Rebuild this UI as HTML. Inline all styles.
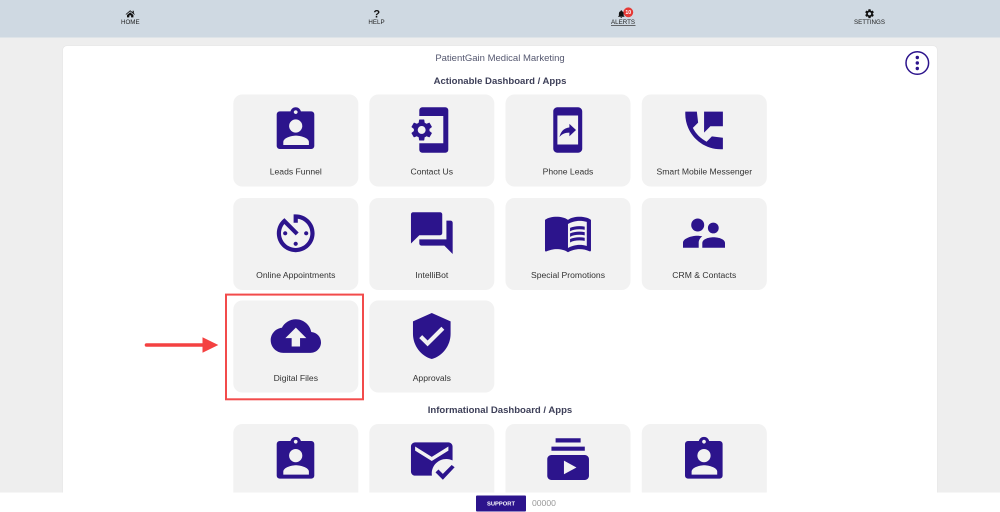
<!DOCTYPE html>
<html><head><meta charset="utf-8"><title>Dashboard</title>
<style>
html,body{margin:0;padding:0;background:#eee;width:1000px;height:512px;overflow:hidden}
svg{display:block}
text{font-family:"Liberation Sans",Arial,sans-serif}
.l{font-size:8.6px;fill:#333;text-anchor:middle}
.n{font-size:6.2px;fill:#222;text-anchor:middle}
.h{font-size:9.55px;fill:#3d3f58;font-weight:bold;text-anchor:middle}
.i{fill:#2c148c}
.t{fill:#f2f2f2}
</style></head><body>
<svg width="1000" height="512" viewBox="0 0 1000 512" xmlns="http://www.w3.org/2000/svg">
<rect width="1000" height="512" fill="#eeeeee"/>
<rect x="62.5" y="45.5" width="875" height="470" rx="4" fill="#e6e6e6"/>
<rect x="63" y="46" width="874" height="470" rx="4" fill="#fff"/>
<rect width="1000" height="37.5" fill="#cfd9e2"/>

<!-- nav -->
<path d="M130.2 10.3l2.4 2v-1.6h1.2v2.6l1 .9-.5.6-4.1-3.4-4.1 3.4-.5-.6zM127 15l3.2-2.6 3.2 2.6v2.4h-2.3v-2h-1.8v2H127z" fill="#111"/>
<text x="130.3" y="24" class="n">HOME</text>
<text x="376.7" y="17.5" font-size="11" font-weight="bold" text-anchor="middle" fill="#111">?</text>
<text x="376.5" y="24" class="n">HELP</text>
<g transform="translate(616.5 9.2) scale(.4)"><path fill="#111" d="M12 22c1.1 0 2-.9 2-2h-4c0 1.1.89 2 2 2zm6-6v-5c0-3.07-1.64-5.64-4.5-6.32V4c0-.83-.67-1.5-1.5-1.5s-1.5.67-1.5 1.5v.68C7.63 5.36 6 7.92 6 11v5l-2 2v1h16v-1l-2-2z"/></g>
<circle cx="628.3" cy="12.3" r="4.9" fill="#e53935"/>
<text x="628.3" y="14.2" font-size="5.2" font-weight="bold" fill="#fff" text-anchor="middle">10</text>
<text x="623" y="24" class="n">ALERTS</text>
<rect x="611" y="25" width="24.5" height=".7" fill="#333"/>
<g transform="translate(864 8.2) scale(.46)"><path fill="#111" d="M19.14 12.94c.04-.3.06-.61.06-.94 0-.32-.02-.64-.07-.94l2.03-1.58c.18-.14.23-.41.12-.61l-1.92-3.32c-.12-.22-.37-.29-.59-.22l-2.39.96c-.5-.38-1.03-.7-1.62-.94L14.4 2.81c-.04-.24-.24-.41-.48-.41h-3.84c-.24 0-.43.17-.47.41L9.25 5.35c-.59.24-1.13.57-1.62.94l-2.39-.96c-.22-.08-.47 0-.59.22L2.74 8.87c-.12.21-.08.47.12.61l2.03 1.58c-.05.3-.09.63-.09.94s.02.64.07.94l-2.03 1.58c-.18.14-.23.41-.12.61l1.92 3.32c.12.22.37.29.59.22l2.39-.96c.5.38 1.03.7 1.62.94l.36 2.54c.05.24.24.41.48.41h3.84c.24 0 .44-.17.47-.41l.36-2.54c.59-.24 1.13-.56 1.62-.94l2.39.96c.22.08.47 0 .59-.22l1.92-3.32c.12-.22.07-.47-.12-.61l-2.01-1.58zM12 15.6c-1.98 0-3.6-1.62-3.6-3.6s1.62-3.6 3.6-3.6 3.6 1.62 3.6 3.6-1.62 3.6-3.6 3.6z"/></g>
<text x="869.5" y="24" class="n">SETTINGS</text>

<!-- titles -->
<text x="500" y="61" font-size="9.5" fill="#555870" text-anchor="middle">PatientGain Medical Marketing</text>
<text x="500" y="84" class="h">Actionable Dashboard / Apps</text>
<text x="500" y="413" class="h">Informational Dashboard / Apps</text>

<!-- menu -->
<circle cx="917.3" cy="63" r="11.3" fill="#fff" stroke="#2c148c" stroke-width="1.5"/>
<circle cx="917.3" cy="57.5" r="1.7" class="i"/><circle cx="917.3" cy="63" r="1.7" class="i"/><circle cx="917.3" cy="68.5" r="1.7" class="i"/>

<!-- tiles -->
<rect x="233.3" y="94.5" width="125" height="92" rx="9" class="t"/>
<rect x="369.3" y="94.5" width="125" height="92" rx="9" class="t"/>
<rect x="505.5" y="94.5" width="125" height="92" rx="9" class="t"/>
<rect x="641.8" y="94.5" width="125" height="92" rx="9" class="t"/>
<rect x="233.3" y="198" width="125" height="92" rx="9" class="t"/>
<rect x="369.3" y="198" width="125" height="92" rx="9" class="t"/>
<rect x="505.5" y="198" width="125" height="92" rx="9" class="t"/>
<rect x="641.8" y="198" width="125" height="92" rx="9" class="t"/>
<rect x="233.3" y="300.5" width="125" height="92" rx="9" class="t"/>
<rect x="369.3" y="300.5" width="125" height="92" rx="9" class="t"/>
<rect x="233.3" y="424" width="125" height="92" rx="9" class="t"/>
<rect x="369.3" y="424" width="125" height="92" rx="9" class="t"/>
<rect x="505.5" y="424" width="125" height="92" rx="9" class="t"/>
<rect x="641.8" y="424" width="125" height="92" rx="9" class="t"/>

<!-- labels -->
<text x="295.8" y="174.7" class="l">Leads Funnel</text>
<text x="431.8" y="174.7" class="l">Contact Us</text>
<text x="568" y="174.7" class="l">Phone Leads</text>
<text x="704.3" y="174.7" class="l">Smart Mobile Messenger</text>
<text x="295.8" y="278" class="l">Online Appointments</text>
<text x="431.8" y="278" class="l">IntelliBot</text>
<text x="568" y="278" class="l">Special Promotions</text>
<text x="704.3" y="278" class="l">CRM &amp; Contacts</text>
<text x="295.8" y="381" class="l">Digital Files</text>
<text x="431.8" y="381" class="l">Approvals</text>

<!-- badge row1 -->
<g>
<path class="i" fill-rule="evenodd" d="M279.7 111.4h10.8c.6-2.4 2.8-4.1 5.2-4.1s4.6 1.7 5.2 4.1h10.4a3 3 0 0 1 3 3V146a3 3 0 0 1-3 3h-31.6a3 3 0 0 1-3-3v-31.6a3 3 0 0 1 3-3zm16 -1.2a1.9 1.9 0 1 0 .01 0z"/>
<circle cx="295.7" cy="126" r="6.6" fill="#f2f2f2"/>
<path fill="#f2f2f2" d="M283.3 145v-3c0-4.2 8.4-6.4 12.6-6.4s13 2.2 13 6.4v3z"/>
</g>
<!-- contact us -->
<path class="i" d="M422.3 107.3h23a3 3 0 0 1 3 3v39.4a3 3 0 0 1-3 3h-23a3 3 0 0 1-3-3v-6.4h24V116h-24v-5.7a3 3 0 0 1 3-3z"/>
<g transform="translate(408.6 116.9) scale(1.09)"><path class="i" d="M19.14 12.94c.04-.3.06-.61.06-.94 0-.32-.02-.64-.07-.94l2.03-1.58c.18-.14.23-.41.12-.61l-1.92-3.32c-.12-.22-.37-.29-.59-.22l-2.39.96c-.5-.38-1.03-.7-1.62-.94L14.4 2.81c-.04-.24-.24-.41-.48-.41h-3.84c-.24 0-.43.17-.47.41L9.25 5.35c-.59.24-1.13.57-1.62.94l-2.39-.96c-.22-.08-.47 0-.59.22L2.74 8.87c-.12.21-.08.47.12.61l2.03 1.58c-.05.3-.09.63-.09.94s.02.64.07.94l-2.03 1.58c-.18.14-.23.41-.12.61l1.92 3.32c.12.22.37.29.59.22l2.39-.96c.5.38 1.03.7 1.62.94l.36 2.54c.05.24.24.41.48.41h3.84c.24 0 .44-.17.47-.41l.36-2.54c.59-.24 1.13-.56 1.62-.94l2.39.96c.22.08.47 0 .59-.22l1.92-3.32c.12-.22.07-.47-.12-.61l-2.01-1.58zM12 15.6c-1.98 0-3.6-1.62-3.6-3.6s1.62-3.6 3.6-3.6 3.6 1.62 3.6 3.6-1.62 3.6-3.6 3.6z"/></g>
<!-- phone leads -->
<g transform="translate(542.9 105.2) scale(2.07)"><path class="i" d="M17 1.01L7 1c-1.1 0-1.99.9-1.99 2v18c0 1.1.89 2 1.99 2h10c1.1 0 2-.9 2-2V3c0-1.1-.9-1.99-2-1.99zM17 19H7V5h10v14zm-4.2-5.76v1.75L16 12l-3.2-2.98v1.7c-3.11.43-4.35 2.56-4.8 4.7 1.11-1.5 2.58-2.18 4.8-2.18z"/></g>
<!-- messenger -->
<g transform="translate(679 105.4) scale(2.09)"><path class="i" d="M21 15.46l-5.27-.61-2.52 2.52c-2.83-1.44-5.15-3.75-6.59-6.59l2.53-2.53L8.54 3H3.03C2.45 13.18 10.82 21.55 21 20.97v-5.51zM12 3v10l3-3h6V3h-9z"/></g>
<!-- appointments -->
<g transform="translate(270.5 208.1) scale(2.1)"><path class="i" d="M11 17c0 .55.45 1 1 1s1-.45 1-1-.45-1-1-1-1 .45-1 1zm0-14v4h2V5.08c3.39.49 6 3.39 6 6.92 0 3.87-3.13 7-7 7s-7-3.13-7-7c0-1.68.59-3.22 1.58-4.42L12 13l1.41-1.41-6.8-6.8v.02C4.42 6.45 3 9.05 3 12c0 4.97 4.02 9 9 9 4.97 0 9-4.03 9-9s-4.03-9-9-9h-1zm7 9c0-.55-.45-1-1-1s-1 .45-1 1 .45 1 1 1 1-.45 1-1zM6 12c0 .55.45 1 1 1s1-.45 1-1-.45-1-1-1-1 .45-1 1z"/></g>
<!-- intellibot -->
<g transform="translate(406.8 208.1) scale(2.085)"><path class="i" d="M21 6h-2v9H6v2c0 .55.45 1 1 1h11l4 4V7c0-.55-.45-1-1-1zm-4 6V3c0-.55-.45-1-1-1H3c-.55 0-1 .45-1 1v14l4-4h10c.55 0 1-.45 1-1z"/></g>
<!-- book -->
<g transform="translate(542.9 207.3) scale(2.09)"><path class="i" d="M21 5c-1.11-.35-2.33-.5-3.5-.5-1.95 0-4.05.4-5.5 1.5-1.45-1.1-3.55-1.5-5.5-1.5S2.45 4.9 1 6v14.65c0 .25.25.5.5.5.1 0 .15-.05.25-.05C3.1 20.45 5.05 20 6.5 20c1.95 0 4.05.4 5.5 1.5 1.35-.85 3.8-1.5 5.5-1.5 1.65 0 3.35.3 4.75 1.05.1.05.15.05.25.05.25 0 .5-.25.5-.5V6c-.6-.45-1.25-.75-2-1zm0 13.5c-1.1-.35-2.3-.5-3.5-.5-1.7 0-4.15.65-5.5 1.5V8c1.35-.85 3.8-1.5 5.5-1.5 1.2 0 2.4.15 3.5.5v11.5z"/><path class="i" d="M17.5 10.5c.88 0 1.73.09 2.5.26V9.24c-.79-.15-1.64-.24-2.5-.24-1.7 0-3.24.29-4.5.83v1.66c1.13-.64 2.7-.99 4.5-.99zM13 12.49v1.66c1.13-.64 2.7-.99 4.5-.99.88 0 1.73.09 2.5.26V11.9c-.79-.15-1.64-.24-2.5-.24-1.7 0-3.24.3-4.5.83zM17.5 14.33c-1.7 0-3.24.29-4.5.83v1.66c1.13-.64 2.7-.99 4.5-.99.88 0 1.73.09 2.5.26v-1.52c-.79-.16-1.64-.24-2.5-.24z"/></g>
<!-- crm -->
<circle cx="697.7" cy="225" r="6.5" class="i"/>
<circle cx="713.3" cy="228" r="5.4" class="i"/>
<path class="i" d="M683 247.7v-5c0-4.4 9-7 14-7 2 0 3.8.3 5.3.6-2 1.6-3.6 3.8-3.6 6.4v5z"/>
<path class="i" d="M702.3 247.7v-4.5c0-4 6-5.9 11.2-5.9s11.5 1.9 11.5 5.9v4.5z"/>
<!-- cloud -->
<g transform="translate(270.7 310.9) scale(2.096)"><path class="i" d="M19.35 10.04C18.67 6.59 15.64 4 12 4 9.11 4 6.6 5.64 5.35 8.04 2.34 8.36 0 10.91 0 14c0 3.31 2.69 6 6 6h13c2.76 0 5-2.24 5-5 0-2.64-2.05-4.78-4.65-4.96zM14 13v4h-4v-4H7l5-5 5 5h-3z"/></g>
<!-- shield -->
<g transform="translate(406.7 310.9) scale(2.09)"><path class="i" d="M12 1L3 5v6c0 5.55 3.84 10.74 9 12 5.16-1.26 9-6.45 9-12V5l-9-4zm-2 16l-4-4 1.41-1.41L10 14.17l6.59-6.59L18 9l-8 8z"/></g>
<!-- red box + arrow -->
<rect x="226" y="294.6" width="137" height="104.7" fill="none" stroke="#f24b4b" stroke-width="2"/>
<path d="M146.5 345H204" stroke="#f44141" stroke-width="3.6" stroke-linecap="round" fill="none"/>
<path d="M202.5 337.3L218.3 345 202.5 352.7z" fill="#f44141"/>

<!-- row 4 -->
<g transform="translate(0 329.6)">
<path class="i" fill-rule="evenodd" d="M279.7 111.4h10.8c.6-2.4 2.8-4.1 5.2-4.1s4.6 1.7 5.2 4.1h10.4a3 3 0 0 1 3 3V146a3 3 0 0 1-3 3h-31.6a3 3 0 0 1-3-3v-31.6a3 3 0 0 1 3-3zm16 -1.2a1.9 1.9 0 1 0 .01 0z"/>
<circle cx="295.7" cy="126" r="6.6" fill="#f2f2f2"/>
<path fill="#f2f2f2" d="M283.3 145v-3c0-4.2 8.4-6.4 12.6-6.4s13 2.2 13 6.4v3z"/>
</g>
<g transform="translate(408.3 329.6)">
<path class="i" fill-rule="evenodd" d="M279.7 111.4h10.8c.6-2.4 2.8-4.1 5.2-4.1s4.6 1.7 5.2 4.1h10.4a3 3 0 0 1 3 3V146a3 3 0 0 1-3 3h-31.6a3 3 0 0 1-3-3v-31.6a3 3 0 0 1 3-3zm16 -1.2a1.9 1.9 0 1 0 .01 0z"/>
<circle cx="295.7" cy="126" r="6.6" fill="#f2f2f2"/>
<path fill="#f2f2f2" d="M283.3 145v-3c0-4.2 8.4-6.4 12.6-6.4s13 2.2 13 6.4v3z"/>
</g>
<g transform="translate(406.8 434) scale(2.08)"><path class="i" d="M12 19c0-3.87 3.13-7 7-7 1.08 0 2.09.25 3 .68V6c0-1.1-.9-2-2-2H4c-1.1 0-2 .9-2 2v12c0 1.1.9 2 2 2h8.08c-.05-.33-.08-.66-.08-1zM4 6l8 5 8-5v2l-8 5-8-5V6zm13.34 16l-3.54-3.54 1.41-1.41 2.12 2.12 4.24-4.24L23 16l-5.66 6z"/></g>
<g transform="translate(543.1 434.1) scale(2.085)"><path class="i" d="M20 8H4V6h16v2zm-2-6H6v2h12V2zm4 10v8c0 1.1-.9 2-2 2H4c-1.1 0-2-.9-2-2v-8c0-1.1.9-2 2-2h16c1.1 0 2 .9 2 2zm-6 4l-6-3.27v6.53L16 16z"/></g>

<!-- footer -->
<rect x="0" y="492.5" width="1000" height="20" fill="#fff"/>
<rect x="476" y="495.5" width="50" height="16" rx="1" fill="#2c148c"/>
<text x="501" y="505.5" font-size="5.8" font-weight="bold" fill="#fff" text-anchor="middle">SUPPORT</text>
<text x="532" y="506" font-size="8.6" fill="#999">00000</text>
</svg>
</body></html>
